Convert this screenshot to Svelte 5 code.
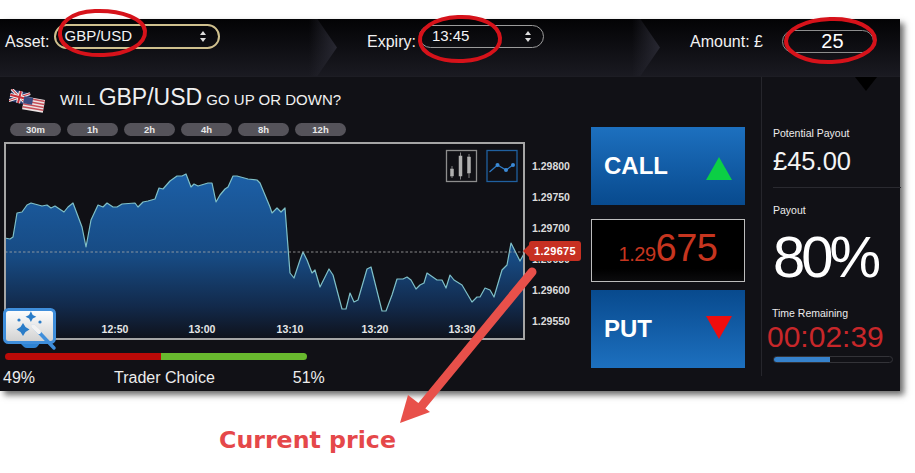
<script>
  const pts = "5,238 10,239 13,237 17,213 22,212 27,205 31,203 42,206 47,205 51,208 55,206 64,212 68,207 73,203 82,227 86,247 91,220 98,205 103,207 107,203 113,207 117,207 122,204 135,203 138,207 143,202 148,201 155,199 159,188 163,189 170,181 177,176 182,176 186,174 191,187 194,184 198,186 208,183 212,183 216,202 220,195 225,189 228,187 233,176 237,176 248,179 257,180 260,183 270,207 272,213 277,208 281,212 285,208 290,273 294,278 300,260 303,252 307,260 312,273 315,270 320,287 329,269 333,275 342,309 346,309 350,293 354,302 358,300 367,269 371,267 380,303 382,311 386,311 392,295 397,279 403,279 407,277 411,280 416,289 420,285 424,283 427,273 437,280 442,280 446,288 450,275 454,280 462,285 472,302 477,297 480,297 485,288 490,290 494,297 502,270 507,265 511,243 520,261 525,252";
  const area = `5,339 ${pts} 525,339`;
  const ranges = ["30m", "1h", "2h", "4h", "8h", "12h"];
  const times = [["12:50", 115], ["13:00", 202], ["13:10", 290], ["13:20", 375], ["13:30", 462]];
  const axis = ["1.29800", "1.29750", "1.29700", "1.29650", "1.29600", "1.29550"];
</script>

<div class="page">
  <div class="panel">
    <header class="topbar">
      <div class="seg seg1">
        <span class="lbl">Asset:</span>
        <div class="select gold"><span>GBP/USD</span><i class="spin"></i></div>
      </div>
      <div class="seg seg2">
        <span class="lbl">Expiry:</span>
        <div class="select grey"><span>13:45</span><i class="spin"></i></div>
      </div>
      <div class="seg seg3">
        <span class="lbl">Amount: £</span>
        <div class="amount">25</div>
      </div>
    </header>

    <main class="body">
      <section class="left">
        <div class="title">
          <svg class="flags" viewBox="0 0 36 24" width="36" height="24" aria-hidden="true">
            <g transform="rotate(14 10 8)">
              <rect x="1" y="2" width="19" height="12" fill="#28386e" />
              <path d="M1 2l19 12M20 2L1 14" stroke="#eee" stroke-width="3" />
              <path d="M1 2l19 12M20 2L1 14" stroke="#c8303a" stroke-width="1" />
              <path d="M10.5 2v12M1 8h19" stroke="#eee" stroke-width="4" />
              <path d="M10.5 2v12M1 8h19" stroke="#c8303a" stroke-width="2" />
            </g>
            <g transform="rotate(10 24 16)">
              <rect x="14" y="9" width="21" height="13" fill="#ece4e4" />
              <path d="M14 10.500h21M14 13.500h21M14 16.500h21M14 19.500h21" stroke="#c8505a" stroke-width="1.500" />
              <rect x="14" y="9" width="9" height="7" fill="#3a4a80" />
            </g>
          </svg>
          <h1>WILL <b>GBP/USD</b> GO UP OR DOWN?</h1>
        </div>
        <div class="ranges">
          {#each ranges as r}<span class="range">{r}</span>{/each}
        </div>

        <div class="chartrow">
          <svg class="chart" viewBox="4 142 521 198" width="521" height="198">
            <defs>
              <linearGradient id="fill" gradientUnits="userSpaceOnUse" x1="0" y1="175" x2="0" y2="340">
                <stop offset="0" stop-color="#1c5fa6" />
                <stop offset="0.5" stop-color="#174a82" />
                <stop offset="0.8" stop-color="#12294a" />
                <stop offset="1" stop-color="#0f1119" />
              </linearGradient>
            </defs>
            <rect x="4" y="142" width="521" height="198" fill="#101015" />
            <polygon points={area} fill="url(#fill)" />
            <polyline points={pts} fill="none" stroke="#7fc0c8" stroke-width="1.200" stroke-linejoin="round" />
            <line x1="5" x2="525" y1="252" y2="252" stroke="#a8a8a8" stroke-width="0.800" stroke-dasharray="2.500 2" />
            {#each times as [t, x]}
              <text x={x} y="333" text-anchor="middle" class="tick">{t}</text>
            {/each}

            <rect x="446.500" y="150.500" width="30" height="31" fill="none" stroke="#8d8d8d" stroke-width="1.300" />
            <g fill="#b0b0b0" stroke="#b0b0b0">
              <path d="M452 166v12M460.500 152.500v27M469 154v24" stroke-width="0.700" />
              <rect x="450.500" y="169" width="3" height="7" stroke-width="0.500" />
              <rect x="459" y="156" width="3" height="20" stroke-width="0.500" />
              <rect x="467.500" y="157" width="3" height="16" stroke-width="0.500" />
            </g>
            <rect x="487" y="150.500" width="30" height="31" fill="none" stroke="#20609f" stroke-width="1.300" />
            <path d="M489.500 172 L497.500 165 L506 170 L513 165" fill="none" stroke="#2f7cc8" stroke-width="1.200" />
            <g fill="#3b8ad6"><circle cx="497.500" cy="165" r="2" /><circle cx="506" cy="170" r="2" /><circle cx="513" cy="165" r="2" /></g>

            <rect x="5" y="143" width="519" height="196" fill="none" stroke="#a5a5a5" stroke-width="2" />
          </svg>
          <div class="axis">
            {#each axis as a}<span>{a}</span>{/each}
          </div>
          <div class="tag">1.29675</div>
          <svg class="wand" viewBox="0 0 54 44" width="54" height="44" aria-hidden="true">
            <path d="M16 34h22l-4 5q-1 1-3 1H24q-2 0-3-1z" fill="#2f83d2" />
            <rect x="1.500" y="1.500" width="50" height="33" rx="4" fill="url(#wg)" stroke="#3f8edb" stroke-width="3" />
            <defs>
              <linearGradient id="wg" x1="0" y1="0" x2="0" y2="1"><stop offset="0" stop-color="#fff" /><stop offset="1" stop-color="#d0d0d0" /></linearGradient>
            </defs>
            <g fill="#2a7cc8">
              <path d="M21 7l2 4 4 2-4 2-2 4-2-4-4-2 4-2z" transform="translate(9 -3) scale(.9)" />
              <path d="M20 17l2.500 4 4 2.500-4 2.500-2.500 4-2.500-4-4-2.500 4-2.500z" transform="translate(0 -2)" />
              <circle cx="16" cy="12" r="1.600" /><circle cx="37" cy="14" r="1.600" />
            </g>
            <path d="M30 18l21 22" stroke="#3f8edb" stroke-width="3.500" stroke-linecap="round" />
            <path d="M30 18l6 6" stroke="#f2f2f2" stroke-width="4" stroke-linecap="round" />
          </svg>
        </div>

        <div class="bar"><span class="red"></span><span class="green"></span></div>
        <div class="choice"><span>49%</span><span class="tc">Trader Choice</span><span>51%</span></div>
      </section>

      <section class="center">
        <button class="trade call"><span>CALL</span><i class="up"></i></button>
        <div class="price"><small>1.29</small>675</div>
        <button class="trade put"><span>PUT</span><i class="down"></i></button>
      </section>

      <aside class="right">
        <i class="notch"></i>
        <div class="cap first">Potential Payout</div>
        <div class="potential">£45.00</div>
        <hr />
        <div class="cap">Payout</div>
        <div class="pct">80%</div>
        <div class="cap time">Time Remaining</div>
        <div class="clock">00:02:39</div>
        <div class="progress"><span></span></div>
      </aside>
    </main>
  </div>

  <div class="current">Current price</div>

  <svg class="notes" viewBox="0 0 915 473" width="915" height="473" aria-hidden="true">
    <g fill="none" stroke="#d6121a" stroke-width="4">
      <path d="M95 11C70 12 59 24 60 35C61 48 80 56 104 55C128 54 146 44 145 31C144 19 122 10 95 11Z" />
      <path d="M458 17C434 18 419 29 420 41C421 54 440 62 463 61C485 60 501 50 500 38C499 25 482 16 458 17Z" />
      <path d="M830 19C804 20 786 30 786 41C786 53 806 63 832 62C856 61 875 51 875 40C875 28 856 18 830 19Z" />
    </g>
    <path d="M532 272L420 408" stroke="#e8504a" stroke-width="9" stroke-linecap="round" />
    <polygon points="400,423 408,395 430,412" fill="#e8504a" />
  </svg>
</div>

<style>
  :global(body) { margin: 0; background: #fff; }
  .page {
    position: relative;
    width: 915px;
    height: 473px;
    overflow: hidden;
    padding-top: 19px;
    box-sizing: border-box;
    font-family: "Liberation Sans", Arial, sans-serif;
    color: #fff;
  }
  .panel {
    width: 900px;
    height: 372px;
    background: #111116;
    box-shadow: 4px 4px 6px rgba(60, 60, 60, 0.75);
    display: flex;
    flex-direction: column;
  }
  .topbar {
    height: 58px;
    flex: none;
    display: flex;
    background: linear-gradient(#030305, #1a1a21);
    border-bottom: 1px solid #1d1d24;
    box-sizing: border-box;
  }
  .seg { position: relative; display: flex; align-items: flex-start; box-sizing: border-box; }
  .seg1 { width: 337px; padding-left: 5px; }
  .seg2 { width: 323px; padding-left: 30px; }
  .seg3 { flex: 1; padding-left: 30px; }
  .seg1::after, .seg2::after {
    content: "";
    position: absolute;
    right: 0;
    top: 0;
    bottom: 0;
    width: 28px;
    background: linear-gradient(90deg, rgba(38, 38, 48, 0), #282832);
    clip-path: polygon(0 0, 30% 0, 100% 50%, 30% 100%, 0 100%);
  }
  .lbl { font-size: 16px; line-height: 18px; margin-top: 14px; color: #f2f2f2; white-space: nowrap; }
  .select {
    box-sizing: border-box;
    position: relative;
    border-radius: 13px;
    font-size: 15px;
    line-height: 20px;
    color: #f4f4f4;
  }
  .select.gold { width: 166px; height: 25px; margin: 5px 0 0 5px; border: 2px solid #cfc08e; padding: 0 8px; }
  .select.grey { width: 125px; height: 23px; margin: 6px 0 0 3px; border: 1px solid #9b9b9b; padding: 0 12px; }
  .spin::before, .spin::after {
    content: "";
    position: absolute;
    right: 12px;
    border-left: 3px solid transparent;
    border-right: 3px solid transparent;
  }
  .spin::before { top: 5px; border-bottom: 4px solid #ddd; }
  .spin::after { bottom: 5px; border-top: 4px solid #ddd; }
  .amount {
    box-sizing: border-box;
    width: 92px;
    height: 23px;
    margin: 11px 0 0 19px;
    border: 1px solid #8d8d8d;
    border-radius: 12px;
    padding-left: 9px;
    text-align: center;
    font-size: 20px;
    line-height: 21px;
  }
  .body { flex: 1; display: flex; min-height: 0; }
  .left { width: 591px; flex: none; box-sizing: border-box; padding-left: 4px; }
  .title { height: 30px; margin-top: 5px; display: flex; align-items: center; padding-left: 5px; }
  .flags { flex: none; margin-top: 7px; }
  h1 { margin: 0 0 0 15px; font-size: 15px; font-weight: 400; white-space: nowrap; color: #f0f0f0; }
  h1 b { font-size: 23px; font-weight: 400; }
  .ranges { display: flex; gap: 6px; margin: 11px 0 0 6px; }
  .range {
    width: 51px;
    height: 13px;
    border-radius: 7px;
    background: #55535a;
    font-size: 9.500px;
    font-weight: 700;
    line-height: 13px;
    text-align: center;
    color: #e8e8e8;
  }
  .chartrow { position: relative; display: flex; margin-top: 6px; height: 198px; }
  .chart { display: block; flex: none; }
  .tick { font: 700 10.500px "Liberation Sans", Arial, sans-serif; fill: #e6e6e6; }
  .axis {
    display: flex;
    flex-direction: column;
    gap: 18.800px;
    margin: 18px 0 0 7px;
    font-size: 10.500px;
    font-weight: 700;
    line-height: 12.200px;
    color: #dcdcdc;
  }
  .tag {
    position: absolute;
    left: 525px;
    top: 99px;
    width: 52px;
    height: 20px;
    background: #c73022;
    border-radius: 3px;
    font-size: 11px;
    font-weight: 700;
    line-height: 20px;
    text-align: center;
    letter-spacing: 0.300px;
  }
  .tag::before {
    content: "";
    position: absolute;
    left: -6px;
    top: 4px;
    border-top: 6px solid transparent;
    border-bottom: 6px solid transparent;
    border-right: 6px solid #c73022;
  }
  .wand { position: absolute; left: -1px; top: 166px; }
  .bar { display: flex; height: 7px; width: 302px; margin: 13px 0 0 1px; border-radius: 4px; overflow: hidden; }
  .red { width: 156px; background: #bb0a07; }
  .green { flex: 1; background: #68b92e; }
  .choice { position: relative; display: flex; width: 322px; margin: 9px 0 0 -1px; font-size: 16px; line-height: 18px; color: #ececec; }
  .choice .tc { margin-left: 79px; margin-right: 78px; }
  .center { width: 154px; flex: none; display: flex; flex-direction: column; padding-top: 50px; }
  .trade {
    display: flex;
    align-items: center;
    justify-content: space-between;
    height: 78px;
    border: 0;
    padding: 0 13px;
    color: #fff;
    font: 700 24px "Liberation Sans", Arial, sans-serif;
  }
  .call { background: linear-gradient(#1d70bf, #084a8e); }
  .put { background: linear-gradient(#084a8e, #1d70bf); }
  .up, .down { width: 0; height: 0; border-left: 13px solid transparent; border-right: 13px solid transparent; }
  .up { border-bottom: 23px solid #0bcf45; margin-bottom: -4px; }
  .down { border-top: 23px solid #f00d0d; margin-top: -4px; }
  .price {
    box-sizing: border-box;
    height: 63px;
    margin: 14px 0 8px;
    border: 1px solid #bdbdbd;
    background: linear-gradient(#000 80%, #0b0b0d);
    color: #c6351f;
    text-align: center;
    font-size: 38px;
    line-height: 57px;
    letter-spacing: -0.500px;
  }
  .price small { font-size: 20px; }
  .right {
    position: relative;
    flex: 1;
    margin: 0 0 15px 16px;
    border-left: 1px solid #26262c;
    padding-left: 11px;
    display: flex;
    flex-direction: column;
  }
  .notch {
    position: absolute;
    left: 93px;
    top: 0;
    border-left: 11px solid transparent;
    border-right: 11px solid transparent;
    border-top: 14px solid #000;
  }
  .cap { font-size: 10.500px; line-height: 14px; color: #ececec; }
  .first { margin-top: 49px; }
  .potential { font-size: 25.500px; line-height: 30px; margin-top: 6px; color: #f4f4f4; }
  hr { border: 0; border-top: 1px solid #2a2a30; margin: 11px 0 15px 0; width: 128px; }
  .pct { font-size: 58px; line-height: 60px; letter-spacing: -4px; margin-top: 10px; }
  .time { margin-top: 19px; margin-left: -1px; }
  .clock { font-size: 30px; line-height: 30px; margin: 2px 0 0 -6px; color: #c8272a; white-space: nowrap; }
  .progress {
    box-sizing: border-box;
    width: 120px;
    height: 7px;
    margin-top: 4px;
    border: 1px solid #333338;
    border-radius: 4px;
    overflow: hidden;
  }
  .progress span { display: block; width: 56px; height: 100%; background: #3682cc; }
  .current {
    position: absolute;
    left: 219px;
    top: 425px;
    font-family: "DejaVu Sans", sans-serif;
    font-weight: 700;
    font-size: 23.700px;
    line-height: 30px;
    color: #e5484a;
    white-space: nowrap;
  }
  .notes { position: absolute; left: 0; top: 0; pointer-events: none; }
</style>
